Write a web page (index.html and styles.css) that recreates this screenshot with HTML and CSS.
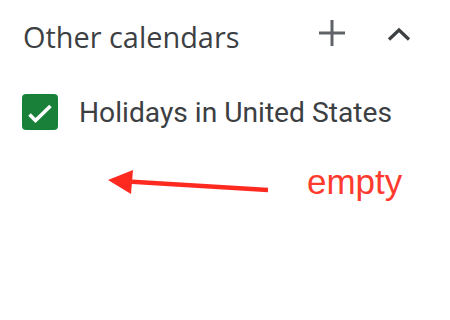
FILE: index.html
```html
<!DOCTYPE html>
<html>
<head>
<meta charset="utf-8">
<link rel="stylesheet" href="styles.css">
</head>
<body>
<div class="panel">
  <div class="header">
    <span class="title">Other calendars</span>
    <div class="actions">
      <svg class="icon-plus" width="28" height="28" viewBox="0 0 28 28"><path d="M14 1v26M1 14h26" stroke="#5f6368" stroke-width="3" fill="none"/></svg>
      <svg class="icon-chev" width="24" height="16" viewBox="0 0 24 16"><path d="M2 13.5L12 4l10 9.5" stroke="#3c4043" stroke-width="3.2" fill="none"/></svg>
    </div>
  </div>
  <div class="item">
    <span class="checkbox">
      <svg width="36" height="36" viewBox="0 0 36 36"><path d="M7.5 20.5l6 6L28.5 12" stroke="#fff" stroke-width="3.6" fill="none"/></svg>
    </span>
    <span class="label">Holidays in United States</span>
  </div>
  <div class="note">
    <svg class="arrow" width="164" height="28" viewBox="0 0 164 28"><path d="M20 11.5L160 20" stroke="#ff2a1f" stroke-width="4.5" fill="none"/><path d="M0 10L25 0L23 24Z" fill="#ff2a1f"/></svg>
    <span class="note-text">empty</span>
  </div>
</div>
</body>
</html>
```
FILE: styles.css
```css
html, body {
  margin: 0;
  padding: 0;
  background: #fff;
}
.panel {
  width: 450px;
  height: 320px;
  display: flex;
  flex-direction: column;
}
.header {
  display: flex;
  align-items: center;
  height: 40px;
  margin-top: 16px;
  padding-left: 23px;
}
.title {
  font-family: "Open Sans", sans-serif;
  font-size: 28.9px;
  font-weight: 500;
  color: #3c4043;
  flex: 1;
}
.actions {
  display: flex;
  align-items: center;
  gap: 41px;
  padding-right: 39px;
}
.icon-plus { display: block; margin-top: -6px; }
.icon-chev { display: block; margin-top: -4px; }
.item {
  display: flex;
  align-items: center;
  margin-top: 38px;
  padding-left: 22px;
  gap: 21px;
}
.checkbox {
  width: 36px;
  height: 36px;
  border-radius: 4px;
  background: #188038;
  display: block;
}
.checkbox svg { display: block; }
.label {
  font-family: Roboto, sans-serif;
  font-size: 28.2px;
  color: #3c4043;
}
.note {
  display: flex;
  align-items: center;
  margin-top: 36px;
  padding-left: 108px;
  gap: 35px;
}
.arrow { display: block; }
.note-text {
  font-family: "Liberation Sans", Arial, sans-serif;
  font-size: 35px;
  color: #ff3b30;
  margin-top: -4px;
}
```
